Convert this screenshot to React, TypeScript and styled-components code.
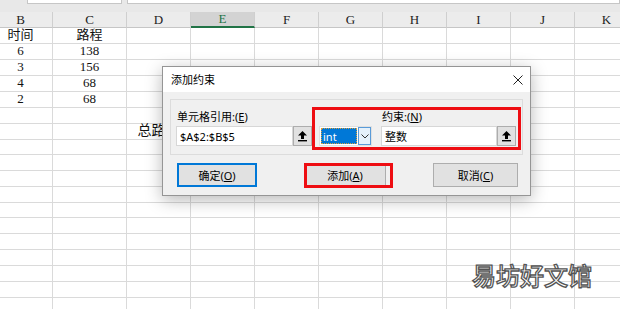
import React from "react";
import styled, { createGlobalStyle } from "styled-components";

const GlobalStyle = createGlobalStyle`
  html, body {
    margin: 0;
    padding: 0;
    background: #fff;
    overflow: hidden;
  }
  body {
    font-family: "Noto Sans", "Noto Sans CJK SC", sans-serif;
  }
`;

const Screen = styled.div`
  position: relative;
  width: 620px;
  height: 309px;
  overflow: hidden;
  background: #fff;
`;

// formula bar remains at the very top
const TopStrip = styled.div`
  display: flex;
  gap: 5px;
  height: 12px;
  padding-left: 27px;
  background: #e8e8e8;
  box-sizing: border-box;
`;

const BarBox = styled.div<{ $w?: number }>`
  height: 4px;
  box-sizing: border-box;
  background: #fff;
  border: 1px solid #c6c6c6;
  border-top: none;
  flex: ${(p) => (p.$w ? `0 0 ${p.$w}px` : "1")};
`;

const COLS = "64px 74px 64px 64px 64px 64px 64px 64px 64px 64px";

const Sheet = styled.div`
  margin-left: -11px;
  width: 650px;
`;

const Row = styled.div<{ $h: number }>`
  display: grid;
  grid-template-columns: ${COLS};
  height: ${(p) => p.$h}px;
`;

const HeadCell = styled.div<{ $active?: boolean }>`
  display: flex;
  align-items: center;
  justify-content: center;
  box-sizing: border-box;
  background: ${(p) => (p.$active ? "#d3d3d3" : "#ececec")};
  border-right: 1px solid #cfcfcf;
  border-bottom: ${(p) => (p.$active ? "2px solid #217346" : "1px solid #c6c6c6")};
  color: ${(p) => (p.$active ? "#217346" : "#222")};
  font-family: "Liberation Serif", "Noto Sans CJK SC", serif;
  font-size: 13px;
  line-height: 14px;
`;

const Cell = styled.div<{ $big?: boolean }>`
  display: flex;
  align-items: center;
  justify-content: center;
  box-sizing: border-box;
  border-right: 1px solid #dadada;
  border-bottom: 1px solid #dadada;
  color: #111;
  font-family: "Liberation Serif", "Noto Sans CJK SC", serif;
  font-size: ${(p) => (p.$big ? "14px" : "13px")};
  line-height: 14px;
  padding-bottom: 1px;
  white-space: nowrap;
`;

/* ---------- dialog ---------- */

const Dialog = styled.div`
  position: absolute;
  left: 162px;
  top: 66px;
  width: 369px;
  height: 130px;
  box-sizing: border-box;
  border: 1px solid #959595;
  background: #f0f0f0;
  box-shadow: 0 4px 16px rgba(0, 0, 0, 0.28);
  display: flex;
  flex-direction: column;
  font-family: "Noto Sans", "Noto Sans CJK SC", sans-serif;
  font-size: 11px;
  color: #000;
`;

const TitleBar = styled.div`
  height: 25px;
  flex: 0 0 25px;
  background: #fff;
  display: flex;
  align-items: center;
  justify-content: space-between;
  padding: 0 7px 0 8px;
`;

const Title = styled.span`
  font-size: 11px;
  line-height: 14px;
`;

const Body = styled.div`
  flex: 1;
  display: flex;
  flex-direction: column;
  padding: 7px 7px 0 7px;
`;

const GroupBox = styled.div`
  height: 56px;
  box-sizing: border-box;
  border: 1px solid #dcdcdc;
  display: flex;
  align-items: flex-end;
  padding: 0 6px 8px 5px;
`;

const Field = styled.div`
  display: flex;
  flex-direction: column;
`;

const Label = styled.div<{ $indent?: number }>`
  font-size: 11px;
  line-height: 14px;
  margin: 0 0 2px ${(p) => p.$indent ?? 1}px;
  white-space: nowrap;
`;

const InputRow = styled.div`
  display: flex;
  height: 20px;
`;

const TextBox = styled.div<{ $w: number }>`
  width: ${(p) => p.$w}px;
  height: 20px;
  box-sizing: border-box;
  background: #fff;
  border: 1px solid #d7d7d7;
  padding-left: 3px;
  display: flex;
  align-items: center;
  font-size: 11px;
`;

const PickButton = styled.div`
  width: 19px;
  height: 20px;
  box-sizing: border-box;
  background: #e1e1e1;
  border: 1px solid #adadad;
  display: flex;
  align-items: center;
  justify-content: center;
`;

const Combo = styled.div`
  display: flex;
  height: 20px;
  width: 54px;
  margin: 0 9px 0 7px;
  box-sizing: border-box;
  background: #fff;
  border: 1px solid #e0e0e0;
`;

const ComboValue = styled.div`
  flex: 1;
  margin: 1px;
  background: #0078d7;
  color: #fff;
  outline: 1px dotted #d8a040;
  outline-offset: -1px;
  display: flex;
  align-items: center;
  padding-left: 2px;
  font-size: 11px;
`;

const ComboDrop = styled.div`
  width: 13px;
  box-sizing: border-box;
  background: #e5f1fb;
  border: 1px solid #5a9bd8;
  display: flex;
  align-items: center;
  justify-content: center;
`;

const ButtonRow = styled.div`
  display: flex;
  justify-content: space-between;
  margin-top: 8px;
  padding: 0 5px 0 7px;
`;

const Button = styled.div<{ $w: number; $default?: boolean }>`
  width: ${(p) => p.$w}px;
  height: 24px;
  box-sizing: border-box;
  background: #e1e1e1;
  border: ${(p) => (p.$default ? "2px solid #0078d7" : "1px solid #adadad")};
  display: flex;
  align-items: center;
  justify-content: center;
  font-size: 11px;
`;

const Mark = styled.div<{ $l: number; $t: number; $w: number; $h: number }>`
  position: absolute;
  left: ${(p) => p.$l}px;
  top: ${(p) => p.$t}px;
  width: ${(p) => p.$w}px;
  height: ${(p) => p.$h}px;
  box-sizing: border-box;
  border: 3px solid #ee0d12;
  pointer-events: none;
`;

const Watermark = styled.div`
  position: absolute;
  left: 472px;
  top: 261px;
  font-family: "Noto Sans CJK SC", sans-serif;
  font-size: 24px;
  font-weight: 500;
  line-height: 28px;
  color: #fff;
  -webkit-text-stroke: 1.3px #555;
`;

const UpArrow = () => (
  <svg width="11" height="12" viewBox="0 0 11 12">
    <path d="M5.5 1 L10 5.5 L7 5.5 L7 9 L4 9 L4 5.5 L1 5.5 Z" fill="#000" />
    <rect x="1" y="10" width="9" height="1.4" fill="#000" />
  </svg>
);

const Chevron = () => (
  <svg width="8" height="5" viewBox="0 0 8 5">
    <path d="M0.5 0.5 L4 4 L7.5 0.5" fill="none" stroke="#333" strokeWidth="1" />
  </svg>
);

const CloseIcon = () => (
  <svg width="10" height="10" viewBox="0 0 10 10">
    <path d="M0.5 0.5 L9.5 9.5 M9.5 0.5 L0.5 9.5" stroke="#222" strokeWidth="1" />
  </svg>
);

const letters = ["B", "C", "D", "E", "F", "G", "H", "I", "J", "K"];

const rowHeights = [16, 16, 16, 16, 16, 16, 15, 16, 16, 16, 16, 15, 16, 16, 16, 16, 16, 16];

const data: Record<number, string[]> = {
  0: ["时间", "路程"],
  1: ["6", "138"],
  2: ["3", "156"],
  3: ["4", "68"],
  4: ["2", "68"],
  6: ["", "", "总路程"],
};

const App: React.FC = () => {
  return (
    <Screen>
      <GlobalStyle />
      <TopStrip>
        <BarBox $w={95} />
        <BarBox />
      </TopStrip>

      <Sheet>
        <Row $h={16}>
          {letters.map((l) => (
            <HeadCell key={l} $active={l === "E"}>
              {l}
            </HeadCell>
          ))}
        </Row>
        {rowHeights.map((h, r) => (
          <Row key={r} $h={h}>
            {letters.map((l, c) => (
              <Cell key={l} $big={r === 6}>
                {data[r]?.[c] ?? ""}
              </Cell>
            ))}
          </Row>
        ))}
      </Sheet>

      <Dialog>
        <TitleBar>
          <Title>添加约束</Title>
          <CloseIcon />
        </TitleBar>
        <Body>
          <GroupBox>
            <Field>
              <Label>
                单元格引用:(<u>E</u>)
              </Label>
              <InputRow>
                <TextBox $w={117}>$A$2:$B$5</TextBox>
                <PickButton>
                  <UpArrow />
                </PickButton>
              </InputRow>
            </Field>
            <Combo>
              <ComboValue>int</ComboValue>
              <ComboDrop>
                <Chevron />
              </ComboDrop>
            </Combo>
            <Field>
              <Label $indent={1}>
                约束:(<u>N</u>)
              </Label>
              <InputRow>
                <TextBox $w={116}>整数</TextBox>
                <PickButton>
                  <UpArrow />
                </PickButton>
              </InputRow>
            </Field>
          </GroupBox>
          <ButtonRow>
            <Button $w={80} $default>
              确定(<u>O</u>)
            </Button>
            <Button $w={82}>
              添加(<u>A</u>)
            </Button>
            <Button $w={85}>
              取消(<u>C</u>)
            </Button>
          </ButtonRow>
        </Body>
        <Mark $l={149} $t={40} $w={209} $h={43} />
        <Mark $l={141} $t={96} $w={89} $h={25} />
      </Dialog>

      <Watermark>易坊好文馆</Watermark>
    </Screen>
  );
};

export default App;
